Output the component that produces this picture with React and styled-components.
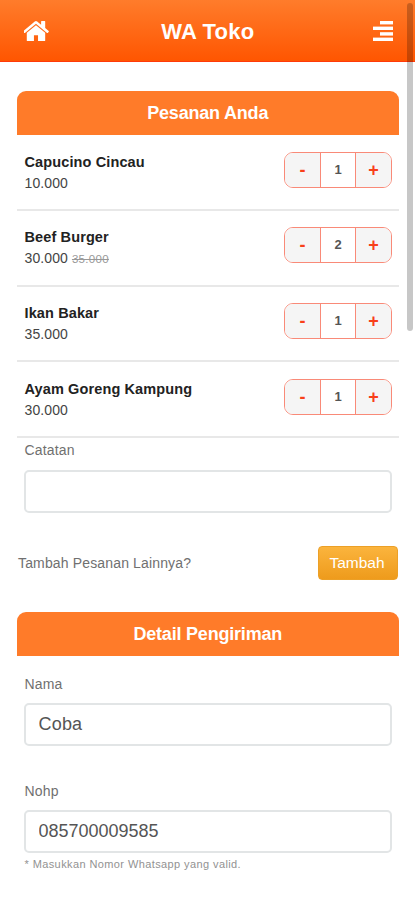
import React, { useState } from 'react'
import styled, { createGlobalStyle } from 'styled-components'

const orders = [
  { id: 1, name: 'Capucino Cincau', price: '10.000', qty: 1 },
  { id: 2, name: 'Beef Burger', price: '30.000', oldPrice: '35.000', qty: 2 },
  { id: 3, name: 'Ikan Bakar', price: '35.000', qty: 1 },
  { id: 4, name: 'Ayam Goreng Kampung', price: '30.000', qty: 1 },
]

const HomeIcon = () => (
  <svg width='25' height='20.5' viewBox='89 253 1550 1283' fill='#fff'>
    <path d='M1408 992v480q0 26-19 45t-45 19h-384v-384h-256v384h-384q-26 0-45-19t-19-45v-480q0-1 .5-3t.5-3l575-474 575 474q1 2 1 6zm223-69l-62 74q-8 9-21 11h-3q-13 0-21-7l-692-577-692 577q-12 8-24 7-13-2-21-11l-62-74q-8-10-7-23.5t11-21.5l719-599q32-26 76-26t76 26l244 204v-195q0-14 9-23t23-9h192q14 0 23 9t9 23v408l219 182q10 8 11 21.5t-7 23.5z' />
  </svg>
)

const MenuIcon = () => (
  <svg width='20' height='20' viewBox='0 0 20 20' fill='#fff'>
    <rect x='7' y='0' width='13' height='3.4' />
    <rect x='0' y='5.6' width='20' height='3.4' />
    <rect x='7' y='11.2' width='13' height='3.4' />
    <rect x='0' y='16.6' width='20' height='3.4' />
  </svg>
)

const OrderItem = ({ name, price, oldPrice, qty }) => {
  const [count, setCount] = useState(qty)

  return (
    <OrderRow>
      <div>
        <ItemName>{name}</ItemName>
        <ItemPrice>
          {price} {oldPrice && <del>{oldPrice}</del>}
        </ItemPrice>
      </div>
      <Stepper>
        <StepButton type='button' onClick={() => setCount(Math.max(0, count - 1))}>
          -
        </StepButton>
        <Count>{count}</Count>
        <StepButton type='button' onClick={() => setCount(count + 1)}>
          +
        </StepButton>
      </Stepper>
    </OrderRow>
  )
}

const App = () => {
  return (
    <>
      <GlobalStyle />
      <Navbar>
        <HomeIcon />
        <h1>WA Toko</h1>
        <MenuIcon />
      </Navbar>
      <Main>
        <SectionTitle>Pesanan Anda</SectionTitle>
        {orders.map((order) => (
          <OrderItem key={order.id} {...order} />
        ))}
        <Field $note>
          <label htmlFor='catatan'>Catatan</label>
          <Input id='catatan' />
        </Field>
        <AddMore>
          <span>Tambah Pesanan Lainnya?</span>
          <AddButton type='button'>Tambah</AddButton>
        </AddMore>
        <SectionTitle>Detail Pengiriman</SectionTitle>
        <Field>
          <label htmlFor='nama'>Nama</label>
          <Input id='nama' defaultValue='Coba' />
        </Field>
        <Field>
          <label htmlFor='nohp'>Nohp</label>
          <Input id='nohp' $digits defaultValue='085700009585' />
          <small>* Masukkan Nomor Whatsapp yang valid.</small>
        </Field>
      </Main>
      <ScrollThumb />
    </>
  )
}

const GlobalStyle = createGlobalStyle`
  * {
    box-sizing: border-box;
  }
  html {
    overflow: hidden;
  }
  body {
    margin: 0;
    height: 900px;
    overflow: hidden;
    background: #fff;
    color: #707070;
    font-family: 'Liberation Sans', Arial, sans-serif;
    font-size: 14px;
  }
`

const Navbar = styled.header`
  height: 62px;
  padding: 0 22px 0 23.5px;
  display: grid;
  grid-template-columns: 25px 1fr 20px;
  align-items: center;
  color: #fff;
  background: linear-gradient(#ff7c2b, #ff5500) border-box;
  border-bottom: 1px solid #ff3a0a;
  svg {
    margin-top: 1px;
  }
  h1 {
    margin: 2px 6px 0 0;
    font-size: 22px;
    line-height: 26px;
    letter-spacing: 0.2px;
    text-align: center;
  }
`

const Main = styled.main`
  padding: 29px 16.5px 0 17px;
`

const SectionTitle = styled.h2`
  height: 44px;
  margin: 0;
  font-size: 18px;
  line-height: 44px;
  letter-spacing: -0.2px;
  text-align: center;
  color: #fff;
  background: #ff7b29;
  border-radius: 9px 9px 0 0;
`

const OrderRow = styled.div`
  height: 75.75px;
  padding: 16.6px 6.5px 0 7.5px;
  display: flex;
  justify-content: space-between;
  border-bottom: 2px solid #e8e8e8;
`

const ItemName = styled.div`
  font-size: 14.5px;
  font-weight: 700;
  line-height: 21px;
  letter-spacing: 0.12px;
  color: #222;
`

const ItemPrice = styled.div`
  line-height: 21px;
  letter-spacing: 0.1px;
  color: #444;
  del {
    font-size: 11.5px;
    letter-spacing: 0.3px;
    color: #999;
  }
`

const Stepper = styled.div`
  width: 108px;
  height: 36px;
  display: grid;
  grid-template-columns: 35px 1fr 35px;
  overflow: hidden;
  border: 1px solid #f98a78;
  border-radius: 9px;
`

const StepButton = styled.button`
  padding: 0;
  border: 0;
  background: #f5f5f5;
  color: #f8401a;
  font: 700 18px/34px 'Liberation Sans', Arial, sans-serif;
`

const Count = styled.span`
  border: solid #f98a78;
  border-width: 0 1px;
  font-size: 13px;
  font-weight: 700;
  line-height: 34px;
  text-align: center;
  color: #555;
`

const Field = styled.div`
  height: ${({ $note }) => ($note ? '74px' : '107px')};
  padding: ${({ $note }) => ($note ? '2.4px' : '17.5px')} 6.5px 0 6.5px;
  display: flex;
  flex-direction: column;
  label {
    padding-left: 1px;
    line-height: 20px;
    letter-spacing: 0.15px;
    margin-bottom: ${({ $note }) => ($note ? '9.5px' : '9px')};
  }
  small {
    padding-left: 1px;
    font-size: 11px;
    line-height: 22px;
    letter-spacing: 0.4px;
    color: #929292;
  }
`

const Input = styled.input`
  width: 100%;
  height: 43px;
  flex: none;
  padding: 0 13px;
  border: 2px solid #e2e5e6;
  border-radius: 5px;
  outline: 0;
  color: #555;
  font: 18px 'Liberation Sans', Arial, sans-serif;
  letter-spacing: ${({ $digits }) => ($digits ? '0' : '0.2px')};
`

const AddMore = styled.div`
  height: 100px;
  padding: 1px 0.5px 0 1px;
  display: flex;
  align-items: center;
  justify-content: space-between;
  letter-spacing: 0.15px;
`

const AddButton = styled.button`
  width: 80px;
  height: 34px;
  padding: 0 2px 0 0;
  border: 1px solid #eca027;
  border-radius: 4px;
  background: linear-gradient(#fbb43d, #ee9b1c);
  color: #fff;
  font: 15.5px 'Liberation Sans', Arial, sans-serif;
`

// floating scroll indicator, drawn over the navbar
const ScrollThumb = styled.div`
  position: absolute;
  top: 3px;
  right: 2px;
  width: 6px;
  height: 328px;
  border-radius: 3px;
  background: rgba(0, 0, 0, 0.22);
`

export default App
